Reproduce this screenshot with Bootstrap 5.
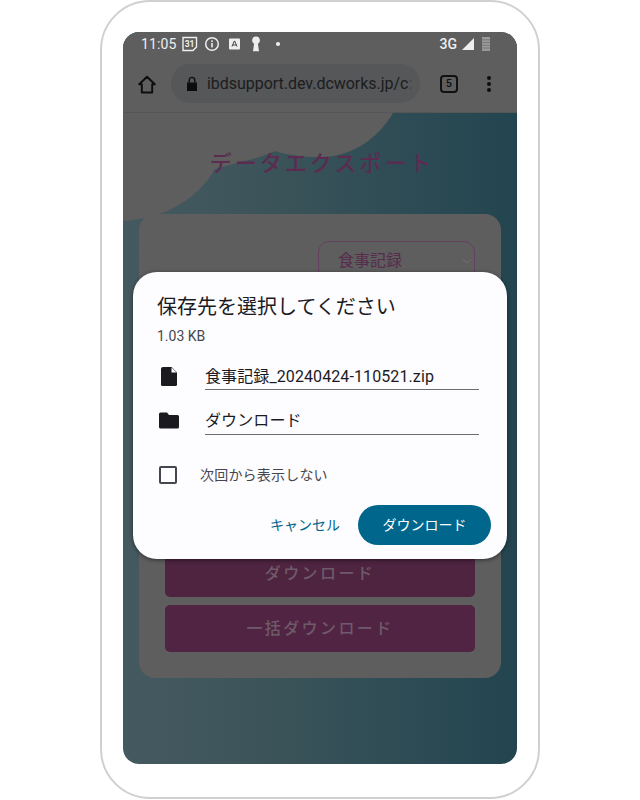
<!DOCTYPE html>
<html lang="ja">
<head>
<meta charset="utf-8">
<title>データエクスポート</title>
<link href="https://cdn.jsdelivr.net/npm/bootstrap@5.3.0/dist/css/bootstrap.min.css" rel="stylesheet">
<style>
html,body{height:800px;overflow:hidden;background:#fff}
body{font-family:Roboto,"Noto Sans CJK JP",sans-serif}
.phone-frame{width:440px;height:799px;margin-left:100px;border:2px solid #d0d0d0;border-radius:50px;padding:30px 21px 0;background:#fff}
.phone-screen{width:394px;height:732px;border-radius:16px;overflow:hidden;position:relative;background:linear-gradient(90deg,#455a60 0%,#3a5359 40%,#234550 100%)}
.status-row{height:32px;background:#5e5e5e;padding:0 26px 8px 18px;color:#eee;font-size:14px}
.status-time{width:35px;letter-spacing:.1px}
.status-3g{font-weight:500;font-size:14px;margin-right:4px}
.gap-a{margin-left:6px}
.gap-b{margin-left:7px}
.gap-c{margin-left:11px}
.tool-row{height:49px;background:#5e5e5e;border-bottom:1px solid #565656;padding:0 0 9px 13px}
.url-pill{width:249px;height:39px;margin-left:13px;background:#555759;border-radius:20px;padding-left:15px;color:#1c1c1e;font-size:16px;white-space:nowrap}
.url-text{margin-left:9px;letter-spacing:-.03px}
.url-fade{color:#44464a}
.tab-count{width:18px;height:18px;border:2px solid #111;border-radius:4px;font-size:11px;font-weight:500;color:#111;line-height:14px;text-align:center;margin-left:20px}
.menu-dots{margin-left:28px}
.page-area{height:651px;position:relative;padding:0 16px}
.blob-art{position:absolute;left:0;top:0}
.page-title{position:relative;height:101px;padding-top:35px;margin:0;font-size:22px;line-height:32px;font-weight:500;letter-spacing:3px;color:#5c2b50;text-align:center;padding-left:4px}
.panel-box{position:relative;height:464px;background:#5e5e5e;border-radius:16px;padding:27px 26px 0}
.pick-box{width:157px;height:40px;border:1px solid #664060;border-radius:11px;color:#582c4d;font-size:16px;padding:0 2px 0 19px;margin-left:153px}
.dl-stack{margin-top:269px}
.dl-btn{height:47px;background:#4e2440;border-radius:5px;color:#6f5a69;font-size:16px;letter-spacing:2.4px;font-weight:500;margin-bottom:8px}
.dl-wide{background:#512443}
.save-dialog{position:absolute;left:10px;top:240px;width:374px;height:287px;background:#fdfcff;border-radius:24px;box-shadow:0 1px 4px rgba(0,0,0,.5);padding:21px 16px 0 24px;color:#1b1b1f}
.dlg-title{font-size:20px;line-height:28px;margin:0;font-weight:400}
.dlg-size{font-size:14px;line-height:20px;color:#44474e;margin-top:5px}
.field-first{height:44px}
.field-next{height:45px}
.field-icon{width:24px;margin-right:24px}
.icon-file{padding-bottom:3px}
.icon-folder{padding-bottom:6px}
.field-line{width:274px;height:30px;border-bottom:1px solid #6c6d70;font-size:16px;line-height:25px;padding-top:3px;letter-spacing:.1px}
.line-first{padding-top:4px}
.check-row{margin-top:28px;height:24px;font-size:14px;color:#44474e;letter-spacing:.2px}
.check-square{width:18px;height:18px;border:2px solid #44474e;border-radius:2px;margin:0 23px 0 2px}
.act-row{margin-top:18px}
.act-cancel{font-size:14px;color:#00668b;margin-right:18px}
.act-primary{width:133px;height:40px;border-radius:20px;background:#00668b;color:#fdfcff;font-size:14px}
</style>
</head>
<body>
<div class="phone-frame">
  <div class="phone-screen">
    <div class="status-row d-flex align-items-center">
      <span class="status-time">11:05</span>
      <svg class="gap-a" width="16" height="16" viewBox="0 0 16 16"><path d="M1 1.500h13.500v9.500l-3.500 3.500H1z" fill="none" stroke="#eee" stroke-width="1.400"/><text x="7.600" y="11" font-size="8.500" font-weight="700" text-anchor="middle" fill="#eee" font-family="Roboto">31</text></svg>
      <svg class="gap-a" width="16" height="16" viewBox="0 0 16 16"><circle cx="8" cy="8" r="6.300" fill="none" stroke="#eee" stroke-width="1.500"/><rect x="7.200" y="7" width="1.600" height="4.400" fill="#eee"/><rect x="7.200" y="4.400" width="1.600" height="1.600" fill="#eee"/></svg>
      <svg class="gap-b" width="16" height="16" viewBox="0 0 16 16"><rect x="2" y="2.500" width="11" height="11" rx="1" fill="#eee"/><path d="M5 10.500 7.300 5h.4l2.300 5.500M5.800 9h3.400" stroke="#444" stroke-width="1" fill="none"/></svg>
      <svg class="gap-a" width="14" height="16" viewBox="0 0 14 16"><circle cx="7" cy="4.200" r="3.800" fill="#eee"/><path d="M5.400 5.500h3.200l1.400 9.700H4z" fill="#eee"/></svg>
      <svg class="gap-c" width="8" height="16" viewBox="0 0 8 16"><circle cx="4" cy="8" r="2.100" fill="#eee"/></svg>
      <span class="ms-auto status-3g">3G</span>
      <svg width="14" height="16" viewBox="0 0 14 16"><path d="M13 2V14H1z" fill="#eee"/></svg>
      <svg class="gap-a" width="10" height="16" viewBox="0 0 10 16"><rect x="1" y="1" width="8" height="14" fill="#9a9a9a"/><path d="M1 3.800h8M1 6.500h8M1 9.300h8M1 12h8" stroke="#707070" stroke-width=".8"/></svg>
    </div>
    <div class="tool-row d-flex align-items-center">
      <svg width="22" height="22" viewBox="0 0 22 22"><path d="M11 3.800 3.200 11.300h2.600V19.500h10.400V11.300h2.600z" fill="none" stroke="#0d0d0d" stroke-width="1.900" stroke-linejoin="round"/></svg>
      <div class="url-pill d-flex align-items-center">
        <svg width="12" height="16" viewBox="0 0 12 16"><path d="M1 6.500h10V15H1z" fill="#0d0d0d"/><path d="M3.200 6.500V4.200a2.800 2.800 0 0 1 5.600 0v2.300" fill="none" stroke="#0d0d0d" stroke-width="1.400"/></svg>
        <span class="url-text">ibdsupport.dev.dcworks.jp/c<span class="url-fade">:</span></span>
      </div>
      <span class="tab-count">5</span>
      <svg class="menu-dots" width="6" height="18" viewBox="0 0 6 18"><circle cx="3" cy="3" r="2" fill="#0d0d0d"/><circle cx="3" cy="9" r="2" fill="#0d0d0d"/><circle cx="3" cy="15" r="2" fill="#0d0d0d"/></svg>
    </div>
    <div class="page-area">
      <svg class="blob-art" width="394" height="120" viewBox="0 0 394 120"><path d="M0 0H270C255 26 228 44 198 44 180 44 165 42 152 38 135 46 112 50 92 56 75 85 45 105 0 108Z" fill="#5e5e5e"/></svg>
      <h1 class="page-title">データエクスポート</h1>
      <div class="panel-box">
        <div class="pick-box d-flex align-items-center justify-content-between">
          <span>食事記録</span>
          <svg width="10" height="6" viewBox="0 0 10 6"><path d="M1 1l4 4 4-4" fill="none" stroke="#7a6a75" stroke-width="1"/></svg>
        </div>
        <div class="dl-stack">
          <div class="dl-btn d-flex align-items-center justify-content-center">ダウンロード</div>
          <div class="dl-btn dl-wide d-flex align-items-center justify-content-center">一括ダウンロード</div>
        </div>
      </div>
    </div>
    <div class="save-dialog">
      <h2 class="dlg-title">保存先を選択してください</h2>
      <div class="dlg-size">1.03 KB</div>
      <div class="field-first d-flex align-items-end">
        <div class="field-icon icon-file d-flex justify-content-center">
          <svg width="16" height="21" viewBox="0 0 16 21"><path d="M2 1h8.500L16 6.500V18.500a1.500 1.500 0 0 1-1.500 1.500H1.500A1.500 1.500 0 0 1 0 18.500V3a2 2 0 0 1 2-2z" fill="#1b1b1f"/><path d="M10.500 1.500v5h5z" fill="#fdfcff"/></svg>
        </div>
        <div class="field-line line-first">食事記録_20240424-110521.zip</div>
      </div>
      <div class="field-next d-flex align-items-end">
        <div class="field-icon icon-folder d-flex justify-content-center">
          <svg width="20" height="17" viewBox="0 0 20 17"><path d="M1.500 .5h6.500l2 2.500h8.500A1.500 1.500 0 0 1 20 4.500V15a1.500 1.500 0 0 1-1.500 1.500h-17A1.500 1.500 0 0 1 0 15V2A1.500 1.500 0 0 1 1.500 .5z" fill="#1b1b1f"/></svg>
        </div>
        <div class="field-line">ダウンロード</div>
      </div>
      <div class="check-row d-flex align-items-center">
        <span class="check-square"></span>
        <span>次回から表示しない</span>
      </div>
      <div class="act-row d-flex justify-content-end align-items-center">
        <span class="act-cancel">キャンセル</span>
        <span class="act-primary d-flex align-items-center justify-content-center">ダウンロード</span>
      </div>
    </div>
  </div>
</div>
<script src="https://cdn.jsdelivr.net/npm/bootstrap@5.3.0/dist/js/bootstrap.bundle.min.js"></script>
</body>
</html>
